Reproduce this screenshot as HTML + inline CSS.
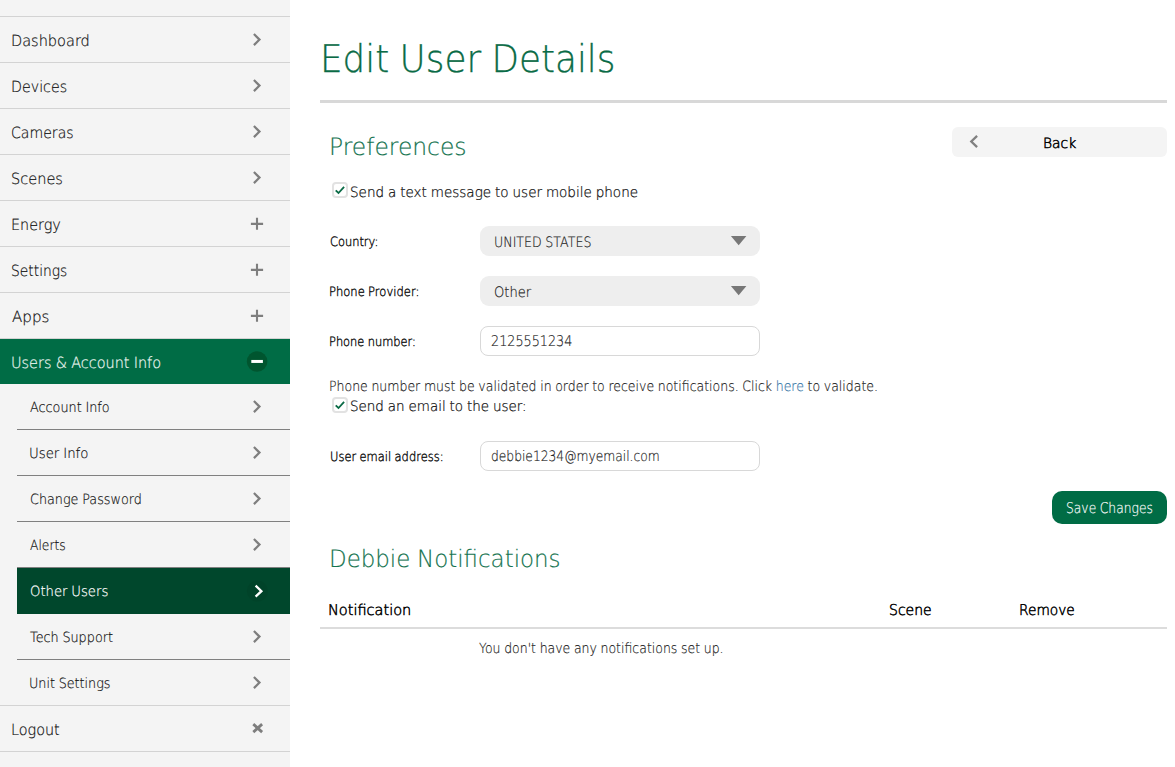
<!DOCTYPE html>
<html lang="en">
<head>
<meta charset="utf-8">
<title>Edit User Details</title>
<style>
*{box-sizing:border-box}
html,body{margin:0;padding:0}
body{width:1175px;height:767px;overflow:hidden;background:#fff;font-family:"Liberation Sans","DejaVu Sans",sans-serif;color:#222;position:relative}
.t{position:absolute;display:block;white-space:nowrap;line-height:1;transform-origin:0 0;color:#1c1c1c;text-rendering:geometricPrecision}
.t.l{font-family:"DejaVu Sans Light","DejaVu Sans","Liberation Sans",sans-serif;font-weight:200;-webkit-text-stroke:.18px currentColor}
.t.r{font-family:"DejaVu Sans Light","DejaVu Sans","Liberation Sans",sans-serif;font-weight:200;-webkit-text-stroke:.4px currentColor}
#side{position:absolute;left:0;top:0;width:290px;height:767px;background:#f4f4f4}
#side ul{list-style:none;margin:0;padding:0;position:absolute;left:0;top:16px;width:290px;border-top:1px solid #d3d3d3}
#side li{position:relative;height:46px;border-bottom:1px solid #d3d3d3}
#side li.act{background:#006c45;border-bottom:0;height:45px;border-top:0}
#side li.sub{margin-left:17px;border-bottom:1px solid #808080}
#side li.sub.last{border-bottom-color:#d3d3d3}
#side li.sub.last:after{content:"";position:absolute;left:-17px;bottom:-1px;width:17px;height:1px;background:#d3d3d3}
#side li.sub.act2{background:#00472c;border-bottom:1px solid #00472c}
.ic{position:absolute;right:22px;top:50%;width:22px;height:22px;margin-top:-11px}
#main{position:absolute;left:0;top:0;width:1175px;height:767px}
h1,h2{margin:0;font-weight:normal;font-size:inherit}
.hr{position:absolute;left:320px;top:100px;width:847px;height:3px;background:#d8d8d8}
.sel{position:absolute;left:480px;width:280px;height:30px;border-radius:9px;background:#eee}
.sel svg{position:absolute;left:250px;top:9px}
.inp{position:absolute;left:480px;width:280px;height:30px;border-radius:8px;background:#fff;border:1px solid #d8d8d8}
.cb{position:absolute;width:16px;height:16px;border:2px solid #e2e2e2;border-radius:4px;background:#fff}
.cb svg{display:block}
.back{position:absolute;left:952px;top:127px;width:215px;height:30px;border-radius:6px;background:#f4f4f4}
.back svg{position:absolute;left:11px;top:4px}
.save{position:absolute;left:1052px;top:491px;width:115px;height:33px;border-radius:10px;background:#006c45}
.hr2{position:absolute;left:320px;top:627px;width:847px;height:2px;background:#dcdcdc}
a{color:#3a79a8;text-decoration:none}
</style>
</head>
<body>
<div id="side">
<ul>
<li><span class="t l" id="m0" style="left:10.77px;top:16.65px;font-size:15.4px;transform:scaleX(0.9439);color:#151515;-webkit-text-stroke-width:0.22px">Dashboard</span><svg class="ic" viewBox="0 .45 22 22"><path d="M7.9 5.5l5.6 5.55-5.6 5.55" fill="none" stroke="#7e7e7e" stroke-width="2.2"/></svg></li>
<li><span class="t l" id="m1" style="left:10.84px;top:16.62px;font-size:15.4px;transform:scaleX(0.9249);color:#151515;-webkit-text-stroke-width:0.22px">Devices</span><svg class="ic" viewBox="0 .45 22 22"><path d="M7.9 5.5l5.6 5.55-5.6 5.55" fill="none" stroke="#7e7e7e" stroke-width="2.2"/></svg></li>
<li><span class="t l" id="m2" style="left:11.25px;top:16.62px;font-size:15.4px;transform:scaleX(0.9150);color:#151515;-webkit-text-stroke-width:0.22px">Cameras</span><svg class="ic" viewBox="0 .45 22 22"><path d="M7.9 5.5l5.6 5.55-5.6 5.55" fill="none" stroke="#7e7e7e" stroke-width="2.2"/></svg></li>
<li><span class="t l" id="m3" style="left:10.98px;top:16.63px;font-size:15.4px;transform:scaleX(0.9446);color:#151515;-webkit-text-stroke-width:0.22px">Scenes</span><svg class="ic" viewBox="0 .45 22 22"><path d="M7.9 5.5l5.6 5.55-5.6 5.55" fill="none" stroke="#7e7e7e" stroke-width="2.2"/></svg></li>
<li><span class="t l" id="m4" style="left:10.81px;top:16.62px;font-size:15.4px;transform:scaleX(0.9328);color:#151515;-webkit-text-stroke-width:0.22px">Energy</span><svg class="ic" viewBox="0 .45 22 22"><path d="M4.9 11.3h12.2M11 5.3v12" fill="none" stroke="#7e7e7e" stroke-width="2.1"/></svg></li>
<li><span class="t l" id="m5" style="left:11.11px;top:16.62px;font-size:15.4px;transform:scaleX(0.8997);color:#151515;-webkit-text-stroke-width:0.22px">Settings</span><svg class="ic" viewBox="0 .45 22 22"><path d="M4.9 11.3h12.2M11 5.3v12" fill="none" stroke="#7e7e7e" stroke-width="2.1"/></svg></li>
<li><span class="t l" id="m6" style="left:12.25px;top:16.62px;font-size:15.4px;transform:scaleX(0.9821);color:#151515;-webkit-text-stroke-width:0.22px">Apps</span><svg class="ic" viewBox="0 .45 22 22"><path d="M4.9 11.3h12.2M11 5.3v12" fill="none" stroke="#7e7e7e" stroke-width="2.1"/></svg></li>
<li class="act"><span class="t l" id="m7" style="left:11.20px;top:16.67px;font-size:15.4px;transform:scaleX(0.9392);color:#eaf5ef;word-spacing:-0.43px;-webkit-text-stroke-width:0.22px">Users &amp; Account Info</span><svg class="ic" viewBox="0 .45 22 22"><circle cx="11.1" cy="10.9" r="10.3" fill="#00552f"/><path d="M5.3 10.9h11.6" fill="none" stroke="#fff" stroke-width="3"/></svg></li>
<li class="sub"><span class="t l" id="s0" style="left:12.72px;top:17.01px;font-size:14.0px;transform:scaleX(0.9144);color:#151515;word-spacing:-0.39px;-webkit-text-stroke-width:0.2px">Account Info</span><svg class="ic" viewBox="0 .45 22 22"><path d="M7.9 5.5l5.6 5.55-5.6 5.55" fill="none" stroke="#7e7e7e" stroke-width="2.2"/></svg></li>
<li class="sub"><span class="t l" id="s1" style="left:11.80px;top:16.98px;font-size:14.0px;transform:scaleX(0.9508);color:#151515;word-spacing:-0.39px;-webkit-text-stroke-width:0.2px">User Info</span><svg class="ic" viewBox="0 .45 22 22"><path d="M7.9 5.5l5.6 5.55-5.6 5.55" fill="none" stroke="#7e7e7e" stroke-width="2.2"/></svg></li>
<li class="sub"><span class="t l" id="s2" style="left:13.13px;top:17.01px;font-size:14.0px;transform:scaleX(0.9126);color:#151515;word-spacing:-0.39px;-webkit-text-stroke-width:0.2px">Change Password</span><svg class="ic" viewBox="0 .45 22 22"><path d="M7.9 5.5l5.6 5.55-5.6 5.55" fill="none" stroke="#7e7e7e" stroke-width="2.2"/></svg></li>
<li class="sub pre"><span class="t l" id="s3" style="left:12.72px;top:16.98px;font-size:14.0px;transform:scaleX(0.8811);color:#151515;-webkit-text-stroke-width:0.2px">Alerts</span><svg class="ic" viewBox="0 .45 22 22"><path d="M7.9 5.5l5.6 5.55-5.6 5.55" fill="none" stroke="#7e7e7e" stroke-width="2.2"/></svg></li>
<li class="sub act2"><span class="t l" id="s4" style="left:12.86px;top:17.08px;font-size:14.0px;transform:scaleX(0.9431);color:#fff;word-spacing:-0.39px;-webkit-text-stroke-width:0.2px">Other Users</span><svg class="ic" viewBox="0 .45 22 22"><circle cx="11.4" cy="11.5" r="10.5" fill="#004329"/><path d="M9.6 6.1l5.8 5.5-5.8 5.5" fill="none" stroke="#fff" stroke-width="2.3"/></svg></li>
<li class="sub"><span class="t l" id="s5" style="left:12.71px;top:17.00px;font-size:14.0px;transform:scaleX(0.9144);color:#151515;word-spacing:-0.39px;-webkit-text-stroke-width:0.2px">Tech Support</span><svg class="ic" viewBox="0 .45 22 22"><path d="M7.9 5.5l5.6 5.55-5.6 5.55" fill="none" stroke="#7e7e7e" stroke-width="2.2"/></svg></li>
<li class="sub last"><span class="t l" id="s6" style="left:11.94px;top:17.00px;font-size:14.0px;transform:scaleX(0.9101);color:#151515;word-spacing:-0.39px;-webkit-text-stroke-width:0.2px">Unit Settings</span><svg class="ic" viewBox="0 .45 22 22"><path d="M7.9 5.5l5.6 5.55-5.6 5.55" fill="none" stroke="#7e7e7e" stroke-width="2.2"/></svg></li>
<li><span class="t l" id="lo" style="left:10.83px;top:16.62px;font-size:15.4px;transform:scaleX(0.9339);color:#151515;-webkit-text-stroke-width:0.22px">Logout</span><svg class="ic" viewBox="0 .45 22 22"><path d="M7.3 6.6l8.8 8M16.1 6.6l-8.8 8" fill="none" stroke="#7e7e7e" stroke-width="2.8"/></svg></li>
</ul>
</div>

<div id="main">
<h1><span class="t l" id="h1" style="left:319.52px;top:41.48px;font-size:38.2px;transform:scaleX(0.9363);color:#0a6b46;word-spacing:-1.07px;-webkit-text-stroke-width:0.32px">Edit User Details</span></h1>
<div class="hr"></div>
<h2><span class="t l" id="h2a" style="left:329.21px;top:135.36px;font-size:24.0px;transform:scaleX(0.9744);color:#14734f;-webkit-text-stroke-width:0.18px">Preferences</span></h2>
<div class="back"><svg width="22" height="22" viewBox="0 0 22 22"><path d="M14.1 4.9l-5.8 5.6 5.8 5.6" fill="none" stroke="#808080" stroke-width="2.3"/></svg></div><span class="t r" id="bk" style="left:1043.08px;top:137.10px;font-size:14.2px;transform:scaleX(0.9760);color:#000;-webkit-text-stroke-width:0.5px">Back</span>
<div class="cb" style="left:332px;top:182px"><svg width="12" height="12" viewBox="0 0 12 12"><path d="M1.7 6.3L4.5 9 10.1 2.9" fill="none" stroke="#0a6b46" stroke-width="1.8"/></svg></div><span class="t l" id="c1" style="left:350.11px;top:185.76px;font-size:14.2px;transform:scaleX(0.9532);color:#111;word-spacing:-0.40px;-webkit-text-stroke-width:0.24px">Send a text message to user mobile phone</span>
<span class="t r" id="l1" style="left:329.76px;top:237.33px;font-size:12.9px;transform:scaleX(0.8847);color:#111">Country:</span><div class="sel" style="top:226px"><svg width="18" height="12" viewBox="0 0 18 12"><path d="M.9 .9h15.5L8.65 10.3z" fill="#777"/></svg></div><span class="t l" id="v1" style="left:493.55px;top:235.99px;font-size:14.4px;transform:scaleX(0.8754);word-spacing:-0.40px">UNITED STATES</span>
<span class="t r" id="l2" style="left:329.47px;top:287.24px;font-size:12.9px;transform:scaleX(0.8955);color:#111;word-spacing:-0.36px">Phone Provider:</span><div class="sel" style="top:276px"><svg width="18" height="12" viewBox="0 0 18 12"><path d="M.9 .9h15.5L8.65 10.3z" fill="#777"/></svg></div><span class="t l" id="v2" style="left:493.64px;top:286.01px;font-size:14.4px;transform:scaleX(0.9095)">Other</span>
<span class="t r" id="l3" style="left:329.47px;top:336.94px;font-size:12.9px;transform:scaleX(0.8859);color:#111;word-spacing:-0.36px">Phone number:</span><div class="inp" style="top:326px"></div><span class="t l" id="v3" style="left:490.70px;top:335.38px;font-size:14.8px;transform:scaleX(0.8632)">2125551234</span>
<span class="t l" id="p1" style="left:328.88px;top:380.12px;font-size:14.1px;transform:scaleX(0.8880);word-spacing:-0.39px">Phone number must be validated in order to receive notifications. Click <a>here</a> to validate.</span>
<div class="cb" style="left:332px;top:397px"><svg width="12" height="12" viewBox="0 0 12 12"><path d="M1.7 6.3L4.5 9 10.1 2.9" fill="none" stroke="#0a6b46" stroke-width="1.8"/></svg></div><span class="t l" id="c2" style="left:349.74px;top:400.16px;font-size:14.2px;transform:scaleX(0.9493);color:#111;word-spacing:-0.40px;-webkit-text-stroke-width:0.24px">Send an email to the user:</span>
<span class="t r" id="l4" style="left:330.18px;top:451.94px;font-size:12.9px;transform:scaleX(0.8916);color:#111;word-spacing:-0.36px">User email address:</span><div class="inp" style="top:441px"></div><span class="t l" id="v4" style="left:491.01px;top:450.39px;font-size:14.4px;transform:scaleX(0.8537)">debbie1234@myemail.com</span>
<div class="save"></div><span class="t l" id="sv" style="left:1066.38px;top:502.39px;font-size:14.8px;transform:scaleX(0.8315);color:#fff;word-spacing:-0.41px">Save Changes</span>
<h2><span class="t l" id="h2b" style="left:329.44px;top:547.16px;font-size:24.0px;transform:scaleX(0.9554);color:#14734f;word-spacing:-0.67px;-webkit-text-stroke-width:0.18px">Debbie Notifications</span></h2>
<div class="thead"><span class="t r" id="t1" style="left:327.56px;top:603.79px;font-size:14.8px;transform:scaleX(0.9814);color:#000;-webkit-text-stroke-width:0.5px">Notification</span><span class="t r" id="t2" style="left:889.31px;top:603.79px;font-size:14.8px;transform:scaleX(0.9476);color:#000;-webkit-text-stroke-width:0.5px">Scene</span><span class="t r" id="t3" style="left:1019.30px;top:603.78px;font-size:14.8px;transform:scaleX(0.9284);color:#000;-webkit-text-stroke-width:0.5px">Remove</span></div>
<div class="hr2"></div>
<span class="t l" id="p2" style="left:478.57px;top:641.92px;font-size:14.1px;transform:scaleX(0.8869);word-spacing:-0.39px">You don't have any notifications set up.</span>
</div>
</body>
</html>
